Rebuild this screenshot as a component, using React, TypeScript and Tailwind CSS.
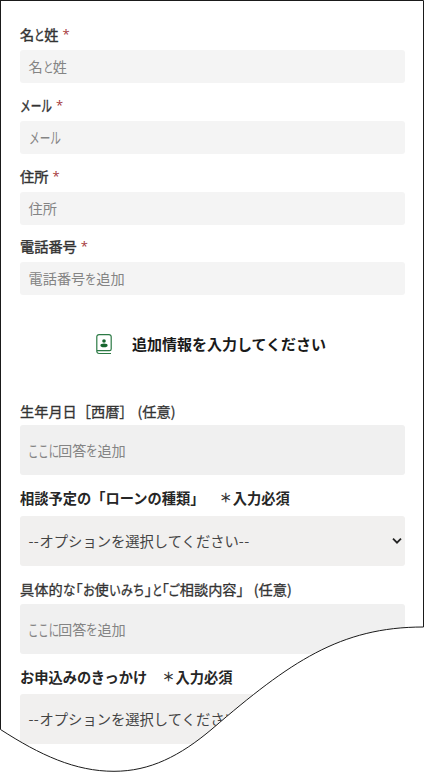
import * as React from 'react';

interface FieldProps {
  label: React.ReactNode;
  children: React.ReactNode;
}

// Short contact field with a required mark
const ContactField = ({ label, children }: FieldProps) => {
  return (
    <div className="flex h-[70.8px] flex-col">
      <div className="-mt-px flex h-5 items-center gap-[4px] text-[#333] [-webkit-text-stroke:0.4px_#333]">
        <span className="flex">{label}</span>
        <span className="font-['Open_Sans',sans-serif] text-[13px] text-[#a4373a] [-webkit-text-stroke:0px]">*</span>
      </div>
      <div className="mt-[6px] flex h-[33px] items-center rounded-[3px] bg-[#f4f4f4] pb-px pl-[8.5px] text-[#848484]">
        {children}
      </div>
    </div>
  );
};

const AnswerBox = () => {
  return (
    <div className="flex h-[50px] items-center rounded-[3px] bg-[#f0f0f0] pl-[8px] text-[#848484]">
      <span className="w-[30px]"><span className="inline-block origin-left scale-x-[0.73] scale-y-110">ここに</span></span>
      <span>回答</span>
      <span className="w-[11px]"><span className="inline-block origin-left scale-x-[0.82] scale-y-105">を</span></span>
      <span>追加</span>
    </div>
  );
};

const SelectBox = () => {
  return (
    <div className="flex h-[50px] items-center justify-between rounded-[3px] bg-[#f1f0ef] pl-[8.5px] pr-[3px] text-[14.3px] text-[#444]">
      <span className="flex">
        <span className="w-[11px] tracking-[0.4px]">--</span>
        <span>オプションを選択してください</span>
        <span className="tracking-[0.4px]">--</span>
      </span>
      <svg className="mt-px" width="10" height="8" viewBox="0 0 10 8" fill="none" stroke="#222" strokeWidth="1.8">
        <path d="M1 1.7 L5 5.7 L9 1.7" />
      </svg>
    </div>
  );
};

const RequiredLabel = ({ children }: { children: React.ReactNode }) => {
  return (
    <div className="flex h-5 items-center text-[14.25px] font-bold text-[#262626]">
      <span>{children}</span>
      <span className="flex w-[14px] justify-center text-[12px] font-normal [-webkit-text-stroke:0.3px_#262626]">＊</span>
      <span>入力必須</span>
    </div>
  );
};

const ContactBookIcon = () => {
  return (
    <svg width="16" height="21" viewBox="0 0 16 21" fill="none" stroke="#2c7a45" strokeWidth="1.2">
      <path d="M15 19.5H3A2.2 2.2 0 0 1 .8 17.3V2.8A2.2 2.2 0 0 1 3 .6H13A2.2 2.2 0 0 1 15.2 2.8V15A1.6 1.6 0 0 1 13.6 16.6H1" />
      <circle cx="8" cy="7" r="1.8" fill="#17662f" stroke="none" />
      <ellipse cx="8" cy="11.4" rx="3.6" ry="1.8" fill="#17662f" stroke="none" />
    </svg>
  );
};

// Wavy bottom edge of the page
const WaveEdge = () => {
  return (
    <svg className="absolute left-0 top-0" width="424" height="772" viewBox="0 0 424 772" fill="none">
      <path
        d="M0 729.5C40 755 75 771.3 114 771.3C150 771.3 180 756 212 729C290 662 340 627 424 627V772H0Z"
        fill="#fff"
      />
      <path
        d="M0.5 0V729.5C40 755 75 771.3 114 771.3C150 771.3 180 756 212 729C290 662 340 627 423.5 627V0.5H0"
        stroke="#1a1a1a"
      />
    </svg>
  );
};

export default function App() {
  return (
    <div className="relative flow-root h-[772px] w-[424px] overflow-hidden whitespace-nowrap bg-white px-5 pr-[19px] pt-[25px] font-['Noto_Sans_CJK_JP',sans-serif] text-[14.2px] leading-5">
      <ContactField
        label={
          <>
            名<span className="w-[10px]"><span className="inline-block origin-left scale-x-[0.75]">と</span></span>姓
          </>
        }
      >
        名<span className="w-[10px]"><span className="inline-block origin-left scale-x-[0.75]">と</span></span>姓
      </ContactField>
      <ContactField
        label={<span className="w-[32px]"><span className="inline-block origin-left scale-x-[0.75] scale-y-110">メール</span></span>}
      >
        <span className="inline-block origin-left scale-x-[0.75] scale-y-110">メール</span>
      </ContactField>
      <ContactField label="住所">住所</ContactField>
      <ContactField label="電話番号">
        電話番号<span className="w-[11px]"><span className="inline-block origin-left scale-x-[0.8]">を</span></span>追加
      </ContactField>

      <div className="mt-[25.8px] flex h-[21px] items-center pl-[76px]">
        <ContactBookIcon />
        <span className="ml-5 text-[15px] font-bold text-[#1a1a1a]">追加情報を入力してください</span>
      </div>

      <div className="mt-[46px] flex h-5 items-center text-[#333] [-webkit-text-stroke:0.3px_#333]">
        <span>生年月日［西暦］</span>
        <span className="ml-[4px]">(任意)</span>
      </div>
      <div className="mt-1">
        <AnswerBox />
      </div>

      <div className="mt-[13px]">
        <RequiredLabel>相談予定の「ローンの種類」<span className="ml-[7px]">　</span></RequiredLabel>
      </div>
      <div className="mt-2">
        <SelectBox />
      </div>

      <div className="mt-[13px] flex h-5 items-center text-[#333] [-webkit-text-stroke:0.3px_#333]">
        <span>具体的</span>
        <span className="w-[13px]"><span className="inline-block origin-left scale-x-[0.88]">な</span></span>
        <span className="w-[7px] [font-feature-settings:'halt']">「</span>
        <span className="w-[12px]"><span className="inline-block origin-left scale-x-[0.85]">お</span></span>
        <span>使</span>
        <span className="w-[36px]"><span className="inline-block origin-left scale-x-[0.84]">いみち</span></span>
        <span className="w-[7px] [font-feature-settings:'halt']">」</span>
        <span className="w-[10px]"><span className="inline-block origin-left scale-x-[0.75]">と</span></span>
        <span className="w-[6px] [font-feature-settings:'halt']">「</span>
        <span className="w-[12px]"><span className="inline-block origin-left scale-x-[0.85]">ご</span></span>
        <span>相談内容</span>
        <span>」</span>
        <span className="ml-[3px]">(任意)</span>
      </div>
      <div className="mt-[5px]">
        <AnswerBox />
      </div>

      <div className="mt-[13px]">
        <RequiredLabel>お申込みのきっかけ　</RequiredLabel>
      </div>
      <div className="mt-[7px]">
        <SelectBox />
      </div>

      <WaveEdge />
    </div>
  );
}
